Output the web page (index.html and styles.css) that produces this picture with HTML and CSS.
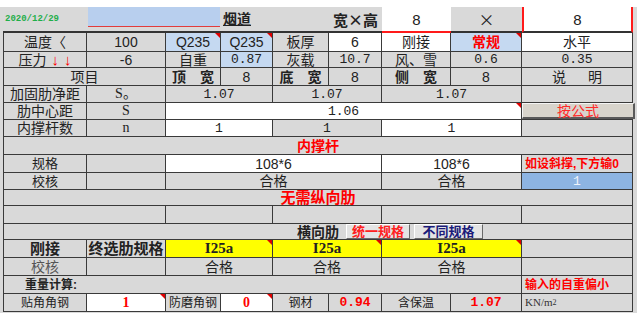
FILE: index.html
```html
<!DOCTYPE html>
<html lang="zh">
<head>
<meta charset="utf-8">
<link rel="stylesheet" href="styles.css">
</head>
<body>
<div class="sheet">
  <!-- row 0 -->
  <div class="c r0 date">2020/12/29</div>
  <div class="c r0 s2 bluecell"><div class="bluebar"></div></div>
  <div class="c r0 s3 title"><span class="yd">烟道</span><span class="kg">宽×高</span></div>
  <div class="c r0 w0 redb">8</div>
  <div class="c r0 x0">×</div>
  <div class="c r0 w0 redlr">8</div>

  <!-- row 1 -->
  <div class="c a">温度〈</div>
  <div class="c">100</div>
  <div class="c blue tri">Q235</div>
  <div class="c blue tri">Q235</div>
  <div class="c">板厚</div>
  <div class="c white">6</div>
  <div class="c white">刚接</div>
  <div class="c blue tri red b">常规</div>
  <div class="c white">水平</div>

  <!-- row 2 -->
  <div class="c a">压力<span class="arr">↓</span><span class="arr">↓</span></div>
  <div class="c">-6</div>
  <div class="c">自重</div>
  <div class="c blue num">0.87</div>
  <div class="c">灰载</div>
  <div class="c num">10.7</div>
  <div class="c">风、雪</div>
  <div class="c num">0.6</div>
  <div class="c num">0.35</div>

  <!-- row 3 -->
  <div class="c a s2">项目</div>
  <div class="c b">顶　宽</div>
  <div class="c">8</div>
  <div class="c b">底　宽</div>
  <div class="c">8</div>
  <div class="c b">侧　宽</div>
  <div class="c">8</div>
  <div class="c sm">说　明</div>

  <!-- row 4 -->
  <div class="c a">加固肋净距</div>
  <div class="c serif">S。</div>
  <div class="c s2 num">1.07</div>
  <div class="c s2 num">1.07</div>
  <div class="c s2 num">1.07</div>
  <div class="c"></div>

  <!-- row 5 -->
  <div class="c a">肋中心距</div>
  <div class="c serif">S</div>
  <div class="c s6 white tri num">1.06</div>
  <div class="c btncell"><div class="fbtn">按公式</div></div>

  <!-- row 6 -->
  <div class="c a">内撑杆数</div>
  <div class="c serif">n</div>
  <div class="c s2 white num">1</div>
  <div class="c s2 num">1</div>
  <div class="c s2 white num">1</div>
  <div class="c"></div>

  <!-- row 7 -->
  <div class="c a s9 red b f14">内撑杆</div>

  <!-- row 8 -->
  <div class="c a f13">规格</div>
  <div class="c"></div>
  <div class="c s4 white">108*6</div>
  <div class="c s2 white">108*6</div>
  <div class="c left red b f12">如设斜撑,下方输0</div>

  <!-- row 9 -->
  <div class="c a f13">校核</div>
  <div class="c"></div>
  <div class="c s4">合格</div>
  <div class="c s2">合格</div>
  <div class="c blue2 num">1</div>

  <!-- row 10 -->
  <div class="c a s9 red b f15">无需纵向肋</div>

  <!-- row 11 -->
  <div class="c a s2"></div>
  <div class="c s2"></div>
  <div class="c s2"></div>
  <div class="c s2"></div>
  <div class="c"></div>

  <!-- row 12 -->
  <div class="c a s9 hrow">
    <span class="hx">横向肋</span>
    <span class="pbtn pred">统一规格</span>
    <span class="pbtn pblue">不同规格</span>
  </div>

  <!-- row 13 -->
  <div class="c a b f15">刚接</div>
  <div class="c b f15">终选肋规格</div>
  <div class="c s2 yellow tri ibeam">I25a</div>
  <div class="c s2 yellow tri ibeam">I25a</div>
  <div class="c s2 yellow tri ibeam">I25a</div>
  <div class="c"></div>

  <!-- row 14 -->
  <div class="c a grey">校核</div>
  <div class="c"></div>
  <div class="c s2">合格</div>
  <div class="c s2">合格</div>
  <div class="c s2">合格</div>
  <div class="c"></div>

  <!-- row 15 -->
  <div class="c a s8 left wt">重量计算:</div>
  <div class="c left red b f12">输入的自重偏小</div>

  <!-- row 16 -->
  <div class="c a f12">贴角角钢</div>
  <div class="c white tri red b serif">1</div>
  <div class="c f12">防磨角钢</div>
  <div class="c white tri red b serif">0</div>
  <div class="c f12">钢材</div>
  <div class="c red b num f12">0.94</div>
  <div class="c f12">含保温</div>
  <div class="c red b num f12">1.07</div>
  <div class="c left unit">KN/m<sup>2</sup></div>
</div>
</body>
</html>
```

FILE: styles.css
```css
* { box-sizing: border-box; margin: 0; padding: 0; }

body {
  width: 640px;
  height: 313px;
  overflow: hidden;
  background: #ffffff;
  font-family: "Liberation Sans", "Noto Sans CJK SC", sans-serif;
  font-size: 14px;
  color: #222;
}

.sheet {
  margin-top: 7px;
  padding-left: 3px;
  width: 637px;
  height: 306px;
  background: #d9d9d9;
  display: grid;
  grid-template-columns: 84px 79px 55px 52px 56px 53px 69px 71px 111px;
  grid-template-rows: 26px 19px 16px 18px 17px 17px 17px 18px 18px 17px 16px 18px 16px 18px 18px 18px 18px;
}

.c {
  position: relative;
  display: flex;
  align-items: center;
  justify-content: center;
  border-right: 1px solid #3a3a3a;
  border-bottom: 1px solid #3a3a3a;
  white-space: nowrap;
  line-height: 1;
  overflow: visible;
}

.a { border-left: 1px solid #3a3a3a; }

.s2 { grid-column: span 2; }
.s3 { grid-column: span 3; }
.s4 { grid-column: span 4; }
.s6 { grid-column: span 6; }
.s8 { grid-column: span 8; }
.s9 { grid-column: span 9; }

.white { background: #ffffff; }
.blue { background: #c5d9f1; }
.blue2 { background: #8db4e2; color: #eef3fb; }
.yellow { background: #ffff00; }

.red { color: #ff0000; }
.b { font-weight: bold; }
.grey { color: #555; }
.left { justify-content: flex-start; padding-left: 3px; }

.f12 { font-size: 12px; }
.f13 { font-size: 13px; }
.f14 { font-size: 14px; }
.f15 { font-size: 15px; }

.num { font-family: "Liberation Mono", "Noto Sans CJK SC", monospace; font-size: 13px; }
.serif { font-family: "Liberation Serif", "Noto Sans CJK SC", serif; font-size: 14px; }
.sm { letter-spacing: 4px; padding-left: 4px; }

.tri::after {
  content: "";
  position: absolute;
  top: 0;
  right: 0;
  border-top: 5px solid #e00000;
  border-left: 5px solid transparent;
}

.arr { color: #ff0000; font-size: 15px; margin-left: 5px; }

/* row 0 */
.r0 { border-right: none; border-bottom: 2px solid #333; }
.date {
  justify-content: flex-start;
  padding-left: 2px;
  font-family: "Liberation Mono", monospace;
  font-size: 9px;
  font-weight: bold;
  color: #1fae4a;
}
.bluecell {
  display: block;
  padding: 0 1px;
}
.bluebar {
  display: block;
  height: 20px;
  background-color: #b8cfee;
  border-bottom: 1px solid #e23c3c;
}
.title {
  justify-content: space-between;
  padding: 0 4px 0 2px;
  font-weight: bold;
  font-size: 14px;
}
.yd { text-decoration: underline; }
.kg { font-family: "Noto Sans CJK SC", sans-serif; font-size: 15px; }
.w0 { background: #ffffff; font-size: 15px; }
.redb { border-bottom: 2px solid #ff1a1a; }
.redlr { border-left: 2px solid #ff1a1a; border-right: 2px solid #ff1a1a; }
.x0 { font-family: "Noto Sans CJK SC", sans-serif; font-size: 16px; }

/* button in row 5 */
.btncell { padding: 0; align-items: stretch; justify-content: stretch; }
.fbtn {
  flex: 1;
  display: flex;
  align-items: center;
  justify-content: center;
  background: #d8d4cc;
  color: #ff2a2a;
  font-size: 14px;
  border-top: 1px solid #f4f4f4;
  border-left: 1px solid #f4f4f4;
  border-right: 2px solid #5a5a5a;
  border-bottom: 2px solid #5a5a5a;
  margin-right: -3px;
}

/* row 12 */
.hrow { justify-content: flex-start; padding-left: 293px; }
.hx { font-weight: bold; font-size: 14px; margin-right: 7px; }
.pbtn {
  display: flex;
  align-items: center;
  justify-content: center;
  height: 15px;
  background: #e4e4e4;
  border-top: 1px solid #ffffff;
  border-left: 1px solid #ffffff;
  border-right: 1px solid #6a6a6a;
  border-bottom: 1px solid #6a6a6a;
  font-size: 13px;
  font-weight: bold;
}
.pred { width: 64px; color: #ff2020; margin-right: 4px; }
.pblue { width: 69px; color: #1b1b7a; }

.ibeam { font-family: "Liberation Serif", serif; font-size: 15px; font-weight: bold; }
.wt { font-weight: bold; font-size: 12px; padding-left: 21px; }
.unit { font-family: "Liberation Serif", serif; font-size: 11px; color: #333; }
.unit sup { font-size: 8px; vertical-align: 4px; }
```
